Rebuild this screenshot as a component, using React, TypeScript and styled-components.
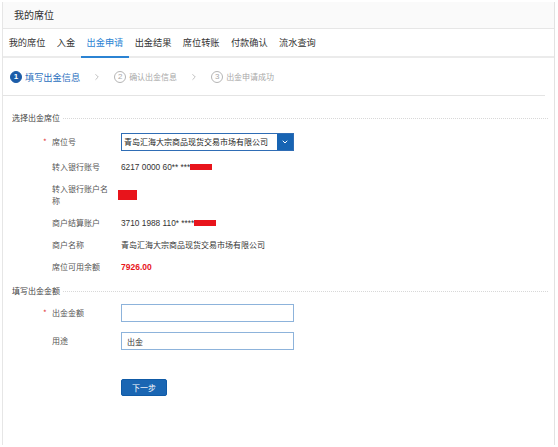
import styled, { createGlobalStyle } from 'styled-components';
import { ChevronRight, ChevronDown } from 'lucide-react';

const GlobalStyle = createGlobalStyle`
  body {
    margin: 0;
    background: #fff;
    font-family: "Noto Sans CJK SC", "Noto Sans", sans-serif;
    color: #333;
  }
  * { box-sizing: border-box; }
`;

const Frame = styled.div`
  margin: 2px 0 0 2px;
  width: 553px;
  height: 443px;
  border-left: 1px solid #e6e6e6;
  border-right: 1px solid #e2e2e2;
  background: #fff;
`;

const Header = styled.div`
  height: 27px;
  line-height: 26px;
  padding-left: 11px;
  background: #fafafa;
  border-bottom: 1px solid #e6e6e6;
  font-size: 10px;
  color: #333;
`;

const Tabs = styled.nav`
  display: flex;
  height: 29px;
  border-bottom: 2px solid #ebebeb;
`;

const Tab = styled.div<{ $active?: boolean }>`
  padding: 0 5.7px;
  line-height: 27px;
  font-size: 9.2px;
  color: ${(p) => (p.$active ? '#2b83d3' : '#333')};
  border-bottom: 2px solid ${(p) => (p.$active ? '#2b83d3' : 'transparent')};
  margin-bottom: -2px;
`;

const Steps = styled.div`
  display: flex;
  align-items: center;
  height: 38px;
  margin-right: 9px;
  padding-left: 7px;
  border-bottom: 1px solid #e4e4e4;
`;

const Step = styled.div<{ $active?: boolean }>`
  display: flex;
  align-items: center;
  gap: 3px;
  font-size: ${(p) => (p.$active ? '9.2px' : '8px')};
  color: ${(p) => (p.$active ? '#2a6fbe' : '#a8a8a8')};
`;

const StepNum = styled.span<{ $active?: boolean }>`
  display: inline-flex;
  align-items: center;
  justify-content: center;
  width: 12px;
  height: 12px;
  border-radius: 50%;
  font-size: 8px;
  font-weight: ${(p) => (p.$active ? 700 : 400)};
  font-family: "Liberation Sans", sans-serif;
  color: ${(p) => (p.$active ? '#fff' : '#a8a8a8')};
  background: ${(p) => (p.$active ? '#1c5ca8' : 'transparent')};
  border: 1px solid ${(p) => (p.$active ? '#1c5ca8' : '#b5b5b5')};
`;

const Arrow = styled.span`
  display: inline-flex;
  margin: 0 12px;
  color: #9a9a9a;
`;

const Content = styled.div`
  padding: 0 6px 0 9px;
`;

const SectionTitle = styled.div<{ $top: number }>`
  display: flex;
  align-items: center;
  margin-top: ${(p) => p.$top}px;
  font-size: 8px;
  line-height: 12px;
  color: #444;

  &::after {
    content: '';
    flex: 1;
    margin-left: 3px;
    border-top: 1px dotted #d8d8d8;
  }
`;

const Form = styled.div<{ $top: number }>`
  display: flex;
  flex-direction: column;
  gap: 10px;
  margin-top: ${(p) => p.$top}px;
`;

const Row = styled.div`
  display: flex;
  align-items: center;
  padding-left: 31px;
  font-size: 8px;
  line-height: 12px;
`;

const Star = styled.span`
  width: 9px;
  color: #e23a3a;
  font-size: 8px;
`;

const Label = styled.span`
  width: 60px;
  margin-right: 9px;
  color: #555;
`;

const Value = styled.span<{ $red?: boolean }>`
  display: flex;
  align-items: center;
  color: ${(p) => (p.$red ? '#e8141b' : '#333')};
  font-weight: ${(p) => (p.$red ? 700 : 400)};
  font-size: ${(p) => (p.$red ? '8.5px' : '8px')};
  font-family: ${(p) =>
    p.$red ? '"Liberation Sans", sans-serif' : '"Noto Sans CJK SC", sans-serif'};
`;

const Digits = styled.span`
  font-family: "Liberation Sans", sans-serif;
  font-size: 8.3px;
`;

const Mask = styled.span<{ $w: number; $h: number; $shift?: number }>`
  display: inline-block;
  width: ${(p) => p.$w}px;
  height: ${(p) => p.$h}px;
  margin-left: ${(p) => p.$shift ?? 0}px;
  background: #e8141b;
`;

const Select = styled.div`
  display: flex;
  width: 173px;
  height: 18px;
  border: 1px solid #2f6db5;
  font-size: 8px;
  color: #222;
`;

const SelectText = styled.span`
  flex: 1;
  padding-left: 2px;
  line-height: 16px;
`;

const SelectButton = styled.span`
  display: flex;
  align-items: center;
  justify-content: center;
  width: 16px;
  background: #1764b3;
  color: #fff;
`;

const Input = styled.input`
  width: 173px;
  height: 18px;
  padding: 0 5px;
  border: 1px solid #8db3db;
  outline: none;
  font-size: 8px;
  font-family: "Noto Sans CJK SC", sans-serif;
  color: #333;
`;

const ButtonRow = styled.div`
  padding-left: 109px;
  margin-top: 22px;
`;

const Button = styled.button`
  width: 46px;
  height: 17px;
  padding: 0;
  border: 1px solid #0f5aa6;
  border-radius: 2px;
  background: #1a66b3;
  color: #fff;
  font-size: 8px;
  font-family: "Noto Sans CJK SC", sans-serif;
`;

const tabs = ['我的席位', '入金', '出金申请', '出金结果', '席位转账', '付款确认', '流水查询'];
const company = '青岛汇海大宗商品现货交易市场有限公司';

export default function App() {
  return (
    <>
      <GlobalStyle />
      <Frame>
        <Header>我的席位</Header>
        <Tabs>
          {tabs.map((t) => (
            <Tab key={t} $active={t === '出金申请'}>
              {t}
            </Tab>
          ))}
        </Tabs>
        <Steps>
          <Step $active>
            <StepNum $active>1</StepNum>
            填写出金信息
          </Step>
          <Arrow>
            <ChevronRight size={10} strokeWidth={1.5} />
          </Arrow>
          <Step>
            <StepNum>2</StepNum>
            确认出金信息
          </Step>
          <Arrow>
            <ChevronRight size={10} strokeWidth={1.5} />
          </Arrow>
          <Step>
            <StepNum>3</StepNum>
            出金申请成功
          </Step>
        </Steps>
        <Content>
          <SectionTitle $top={16}>选择出金席位</SectionTitle>
          <Form $top={9}>
            <Row>
              <Star>*</Star>
              <Label>席位号</Label>
              <Select>
                <SelectText>{company}</SelectText>
                <SelectButton>
                  <ChevronDown size={8} strokeWidth={3} />
                </SelectButton>
              </Select>
            </Row>
            <Row>
              <Star />
              <Label>转入银行账号</Label>
              <Value>
                <Digits>6217 0000 60** ***</Digits>
                <Mask $w={22} $h={6} />
              </Value>
            </Row>
            <Row>
              <Star />
              <Label>转入银行账户名称</Label>
              <Value>
                <Mask $w={19} $h={10} $shift={-3} />
              </Value>
            </Row>
            <Row>
              <Star />
              <Label>商户结算账户</Label>
              <Value>
                <Digits>3710 1988 110* ****</Digits>
                <Mask $w={22} $h={6} />
              </Value>
            </Row>
            <Row>
              <Star />
              <Label>商户名称</Label>
              <Value>{company}</Value>
            </Row>
            <Row>
              <Star />
              <Label>席位可用余额</Label>
              <Value $red>7926.00</Value>
            </Row>
          </Form>
          <SectionTitle $top={12}>填写出金金额</SectionTitle>
          <Form $top={7}>
            <Row>
              <Star>*</Star>
              <Label>出金金额</Label>
              <Input defaultValue="" />
            </Row>
            <Row>
              <Star />
              <Label>用途</Label>
              <Input defaultValue="出金" />
            </Row>
          </Form>
          <ButtonRow>
            <Button>下一步</Button>
          </ButtonRow>
        </Content>
      </Frame>
    </>
  );
}
